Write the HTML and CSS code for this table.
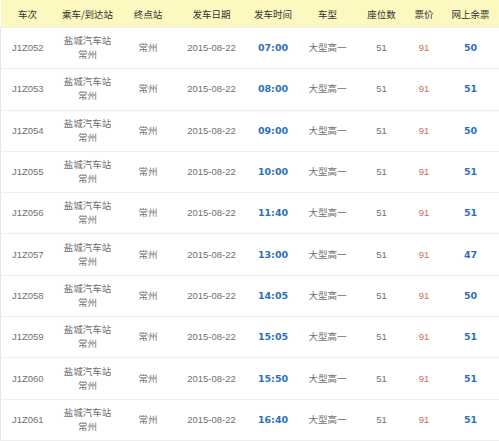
FILE: index.html
```html
<!DOCTYPE html>
<html lang="zh-CN">
<head>
<meta charset="utf-8">
<link rel="stylesheet" href="styles.css">
</head>
<body>
<table class="tbl">
<colgroup>
<col class="c1"><col class="c2"><col class="c3"><col class="c4"><col class="c5"><col class="c6"><col class="c7"><col class="c8"><col class="c9">
</colgroup>
<thead>
<tr><th>车次</th><th>乘车/到达站</th><th>终点站</th><th>发车日期</th><th>发车时间</th><th>车型</th><th>座位数</th><th>票价</th><th>网上余票</th></tr>
</thead>
<tbody>
<tr><td>J1Z052</td><td>盐城汽车站<br>常州</td><td>常州</td><td>2015-08-22</td><td class="time">07:00</td><td>大型高一</td><td>51</td><td class="price">91</td><td class="left">50</td></tr>
<tr><td>J1Z053</td><td>盐城汽车站<br>常州</td><td>常州</td><td>2015-08-22</td><td class="time">08:00</td><td>大型高一</td><td>51</td><td class="price">91</td><td class="left">51</td></tr>
<tr><td>J1Z054</td><td>盐城汽车站<br>常州</td><td>常州</td><td>2015-08-22</td><td class="time">09:00</td><td>大型高一</td><td>51</td><td class="price">91</td><td class="left">50</td></tr>
<tr><td>J1Z055</td><td>盐城汽车站<br>常州</td><td>常州</td><td>2015-08-22</td><td class="time">10:00</td><td>大型高一</td><td>51</td><td class="price">91</td><td class="left">51</td></tr>
<tr><td>J1Z056</td><td>盐城汽车站<br>常州</td><td>常州</td><td>2015-08-22</td><td class="time">11:40</td><td>大型高一</td><td>51</td><td class="price">91</td><td class="left">51</td></tr>
<tr><td>J1Z057</td><td>盐城汽车站<br>常州</td><td>常州</td><td>2015-08-22</td><td class="time">13:00</td><td>大型高一</td><td>51</td><td class="price">91</td><td class="left">47</td></tr>
<tr><td>J1Z058</td><td>盐城汽车站<br>常州</td><td>常州</td><td>2015-08-22</td><td class="time">14:05</td><td>大型高一</td><td>51</td><td class="price">91</td><td class="left">50</td></tr>
<tr><td>J1Z059</td><td>盐城汽车站<br>常州</td><td>常州</td><td>2015-08-22</td><td class="time">15:05</td><td>大型高一</td><td>51</td><td class="price">91</td><td class="left">51</td></tr>
<tr><td>J1Z060</td><td>盐城汽车站<br>常州</td><td>常州</td><td>2015-08-22</td><td class="time">15:50</td><td>大型高一</td><td>51</td><td class="price">91</td><td class="left">51</td></tr>
<tr><td>J1Z061</td><td>盐城汽车站<br>常州</td><td>常州</td><td>2015-08-22</td><td class="time">16:40</td><td>大型高一</td><td>51</td><td class="price">91</td><td class="left">51</td></tr>
</tbody>
</table>
</body>
</html>
```
FILE: styles.css
```css
html, body {
  margin: 0;
  padding: 0;
  background: #ffffff;
}
body {
  font-family: "DejaVu Sans", "Noto Sans CJK SC", sans-serif;
  font-size: 9.5px;
  color: #777;
  width: 499px;
  height: 441px;
  overflow: hidden;
}
.tbl {
  width: 499px;
  border-collapse: collapse;
  table-layout: fixed;
}
.c1 { width: 54px; }
.c2 { width: 66px; }
.c3 { width: 55px; }
.c4 { width: 72px; }
.c5 { width: 51px; }
.c6 { width: 58px; }
.c7 { width: 50px; }
.c8 { width: 35px; }
.c9 { width: 58px; }
.tbl th {
  background: #fdf7c0;
  color: #333;
  font-weight: normal;
  height: 27px;
  padding: 0;
  text-align: center;
  font-family: "Noto Sans CJK SC", sans-serif;
  border-bottom: 1px solid #eeeeee;
}
.tbl td {
  height: 40.3px;
  padding: 0;
  text-align: center;
  border-bottom: 1px solid #eeeeee;
  line-height: 14px;
  font-family: "Liberation Sans", "Noto Sans CJK SC", sans-serif;
  color: #707070;
}
.tbl tbody td:first-child {
  border-left: 1px solid #e6e6e6;
}
.tbl td.time {
  color: #2c6fbd;
  font-weight: bold;
  font-family: "DejaVu Sans", sans-serif;
}
.tbl td.price {
  color: #c9704f;
}
.tbl td.left {
  color: #2c6fbd;
  font-weight: bold;
  font-family: "DejaVu Sans", sans-serif;
}
```
